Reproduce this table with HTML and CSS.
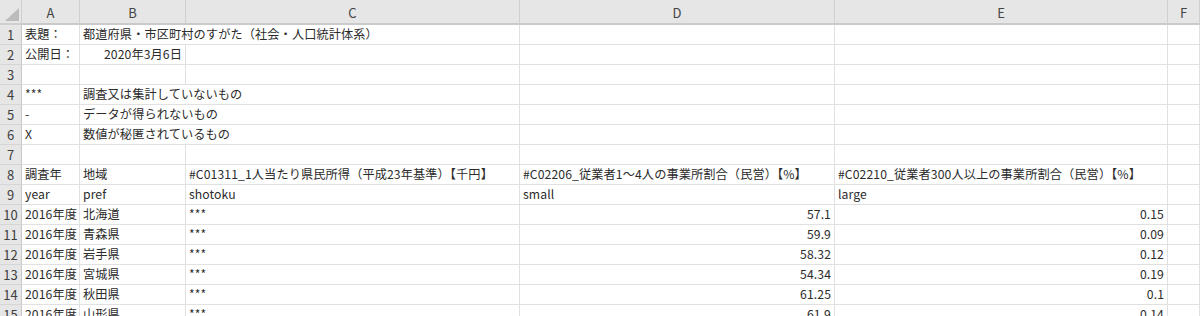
FILE: index.html
```html
<!DOCTYPE html>
<html lang="ja">
<head>
<meta charset="utf-8">
<title>sheet</title>
<link rel="stylesheet" href="styles.css">
</head>
<body>
<div class="sheet">
  <div class="corner"><span class="tri"></span></div>
  <div class="colh">A</div>
  <div class="colh">B</div>
  <div class="colh">C</div>
  <div class="colh">D</div>
  <div class="colh">E</div>
  <div class="colh">F</div>

  <div class="rowh">1</div>
  <div class="c">表題：</div>
  <div class="c span2">都道府県・市区町村のすがた（社会・人口統計体系）</div>
  <div class="c"></div><div class="c"></div><div class="c"></div>

  <div class="rowh">2</div>
  <div class="c">公開日：</div>
  <div class="c r">2020年3月6日</div>
  <div class="c"></div><div class="c"></div><div class="c"></div><div class="c"></div>

  <div class="rowh">3</div>
  <div class="c"></div><div class="c"></div><div class="c"></div><div class="c"></div><div class="c"></div><div class="c"></div>

  <div class="rowh">4</div>
  <div class="c">***</div>
  <div class="c span2">調査又は集計していないもの</div>
  <div class="c"></div><div class="c"></div><div class="c"></div>

  <div class="rowh">5</div>
  <div class="c">-</div>
  <div class="c span2">データが得られないもの</div>
  <div class="c"></div><div class="c"></div><div class="c"></div>

  <div class="rowh">6</div>
  <div class="c">X</div>
  <div class="c span2">数値が秘匿されているもの</div>
  <div class="c"></div><div class="c"></div><div class="c"></div>

  <div class="rowh">7</div>
  <div class="c"></div><div class="c"></div><div class="c"></div><div class="c"></div><div class="c"></div><div class="c"></div>

  <div class="rowh">8</div>
  <div class="c">調査年</div>
  <div class="c">地域</div>
  <div class="c">#C01311_1人当たり県民所得（平成23年基準）【千円】</div>
  <div class="c">#C02206_従業者1～4人の事業所割合（民営）【%】</div>
  <div class="c">#C02210_従業者300人以上の事業所割合（民営）【%】</div>
  <div class="c"></div>

  <div class="rowh">9</div>
  <div class="c">year</div>
  <div class="c">pref</div>
  <div class="c">shotoku</div>
  <div class="c">small</div>
  <div class="c">large</div>
  <div class="c"></div>

  <div class="rowh">10</div>
  <div class="c">2016年度</div><div class="c">北海道</div><div class="c">***</div>
  <div class="c r">57.1</div><div class="c r">0.15</div><div class="c"></div>

  <div class="rowh">11</div>
  <div class="c">2016年度</div><div class="c">青森県</div><div class="c">***</div>
  <div class="c r">59.9</div><div class="c r">0.09</div><div class="c"></div>

  <div class="rowh">12</div>
  <div class="c">2016年度</div><div class="c">岩手県</div><div class="c">***</div>
  <div class="c r">58.32</div><div class="c r">0.12</div><div class="c"></div>

  <div class="rowh">13</div>
  <div class="c">2016年度</div><div class="c">宮城県</div><div class="c">***</div>
  <div class="c r">54.34</div><div class="c r">0.19</div><div class="c"></div>

  <div class="rowh">14</div>
  <div class="c">2016年度</div><div class="c">秋田県</div><div class="c">***</div>
  <div class="c r">61.25</div><div class="c r">0.1</div><div class="c"></div>

  <div class="rowh">15</div>
  <div class="c">2016年度</div><div class="c">山形県</div><div class="c">***</div>
  <div class="c r">61.9</div><div class="c r">0.14</div><div class="c"></div>
</div>
</body>
</html>
```

FILE: styles.css
```css
html, body {
  margin: 0;
  padding: 0;
  background: #ffffff;
  overflow: hidden;
}

.sheet {
  display: grid;
  grid-template-columns: 22px 58px 106px 334px 315px 333px 32px;
  grid-template-rows: 25px repeat(15, 20px);
  width: 1200px;
  font-family: "Noto Sans CJK JP", "Noto Sans", sans-serif;
  font-size: 12.2px;
  letter-spacing: 0.1px;
  color: #2b2b2b;
}

.corner {
  background: #e6e6e6;
  border-right: 1px solid #cfcfcf;
  border-bottom: 2px solid #cfcfcf;
  display: flex;
  justify-content: flex-end;
  align-items: flex-end;
  padding: 0 2px 2px 0;
  box-sizing: border-box;
}

.tri {
  width: 0;
  height: 0;
  border-left: 14px solid transparent;
  border-bottom: 13px solid #bcbcbc;
}

.colh {
  background: #e6e6e6;
  border-right: 1px solid #d0d0d0;
  border-bottom: 2px solid #cacaca;
  box-sizing: border-box;
  display: flex;
  align-items: center;
  justify-content: center;
  font-size: 13px;
  letter-spacing: 0;
  color: #444444;
  padding-top: 1px;
}

.rowh {
  background: #e6e6e6;
  border-right: 1px solid #c8c8c8;
  border-bottom: 1px solid #d6d6d6;
  box-sizing: border-box;
  display: flex;
  align-items: center;
  justify-content: center;
  font-size: 13px;
  letter-spacing: 0;
  color: #404040;
}

.c {
  border-right: 1px solid #e1e1e1;
  border-bottom: 1px solid #e1e1e1;
  box-sizing: border-box;
  padding: 0 3px;
  line-height: 19px;
  white-space: nowrap;
  overflow: hidden;
}

.span2 {
  grid-column: span 2;
}

.r {
  text-align: right;
}
```
